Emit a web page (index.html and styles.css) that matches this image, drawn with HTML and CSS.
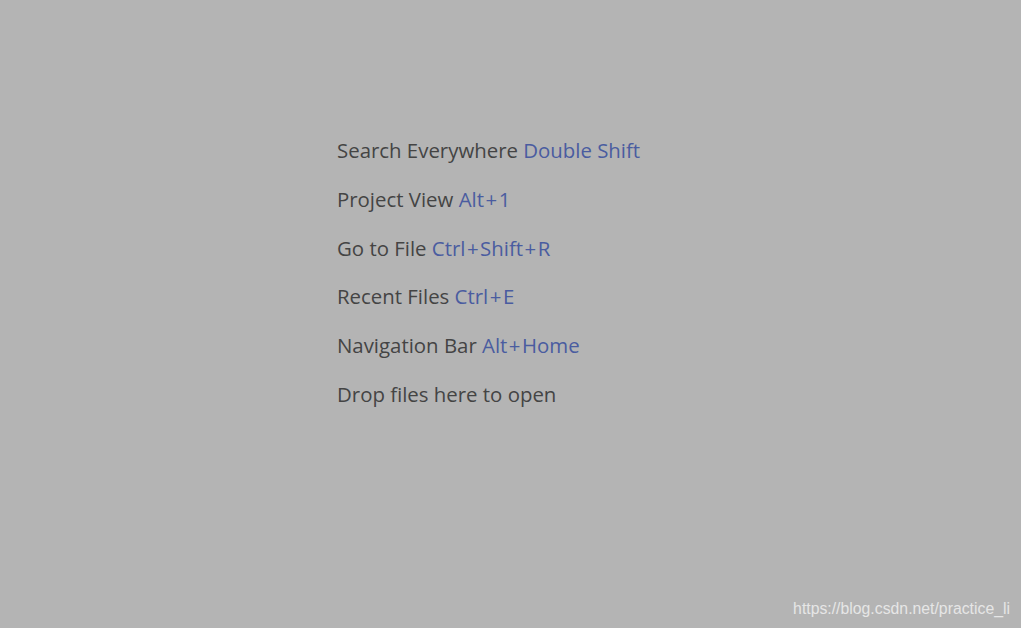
FILE: index.html
```html
<!DOCTYPE html>
<html>
<head>
<meta charset="utf-8">
<link rel="stylesheet" href="styles.css">
</head>
<body>
<div class="page">
  <ul class="hints">
    <li>Search Everywhere <span class="key">Double Shift</span></li>
    <li>Project View <span class="key">Alt<span class="plus">+</span>1</span></li>
    <li>Go to File <span class="key">Ctrl<span class="plus">+</span>Shift<span class="plus">+</span>R</span></li>
    <li>Recent Files <span class="key">Ctrl<span class="plus">+</span>E</span></li>
    <li>Navigation Bar <span class="key">Alt<span class="plus">+</span>Home</span></li>
    <li>Drop files here to open</li>
  </ul>
  <div class="watermark">https://blog.csdn.net/practice_li</div>
</div>
</body>
</html>
```
FILE: styles.css
```css
html, body {
  margin: 0;
  padding: 0;
  background: #b4b4b4;
}
.page {
  width: 1021px;
  height: 628px;
  display: flex;
  flex-direction: column;
}
.hints {
  list-style: none;
  margin: 0;
  padding: 136px 0 0 337px;
  font-family: "Open Sans", sans-serif;
  font-size: 20.4px;
  color: #444444;
}
.hints li {
  height: 48.8px;
  line-height: 28px;
  white-space: nowrap;
}
.key {
  color: #4a5ca0;
}
.plus {
  padding: 0 1.5px;
}
.watermark {
  margin-top: auto;
  align-self: flex-end;
  padding: 0 11px 10px 0;
  font-family: "Liberation Sans", Arial, sans-serif;
  font-size: 15.8px;
  color: #e6e6e6;
}
```
